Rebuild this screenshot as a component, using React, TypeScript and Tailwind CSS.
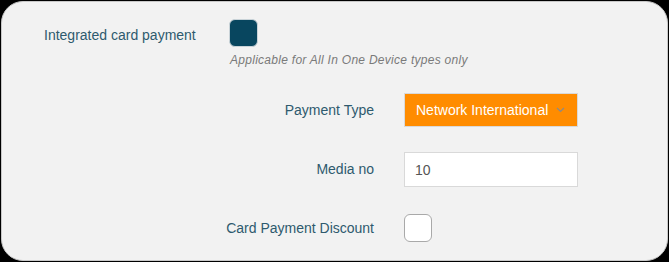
import { useState } from "react";

const labelCls = "text-[14px] text-[#2e5a6e]";

const SettingsPanel = () => {
  const [mediaNo, setMediaNo] = useState("10");

  return (
    <div className="w-[669px] h-[262px] bg-black p-px font-['Liberation_Sans',Arial,sans-serif]">
      <div className="h-full rounded-[22px] border border-[#c8c8c8] bg-[#f2f2f2]">
        {/* integrated card payment */}
        <div className="flex pt-[17px] pl-[42px]">
          <div className={`${labelCls} w-[185px] pt-[6px]`}>Integrated card payment</div>
          <div>
            <div className="w-[29px] h-[28px] rounded-[6px] bg-[#08465f] border border-[#c9d3d8]" />
            <p className="mt-[5px] ml-px text-[12px] leading-4 italic tracking-[0.28px] text-[#7a7a7a]">
              Applicable for All In One Device types only
            </p>
          </div>
        </div>

        <div className="mt-[25px] flex flex-col">
          <div className="flex items-center">
            <div className={`${labelCls} w-[372px] text-right`}>Payment Type</div>
            <div className="ml-[30px] w-[174px] h-[34px] flex items-center justify-between bg-[#ff8c00] border border-[#d9d9d9] pl-[11px] pr-[12px]">
              <span className="text-[14px] text-white">Network International</span>
              <svg width="9" height="6" viewBox="0 0 9 6" fill="none">
                <polyline points="1,1 4.5,4.5 8,1" stroke="#8a8a8a" strokeWidth="1.2" />
              </svg>
            </div>
          </div>

          <div className="mt-[25px] flex items-center">
            <div className={`${labelCls} w-[372px] text-right`}>Media no</div>
            <input
              value={mediaNo}
              onChange={(e) => setMediaNo(e.target.value)}
              className="ml-[30px] w-[174px] h-[35px] bg-white border border-[#d9d9d9] px-[10px] text-[14px] text-[#555] outline-none"
            />
          </div>

          <div className="mt-[27px] flex items-center">
            <div className={`${labelCls} w-[372px] text-right`}>Card Payment Discount</div>
            <div className="ml-[30px] w-[28px] h-[28px] rounded-[6px] bg-white border border-[#a9a9a9]" />
          </div>
        </div>
      </div>
    </div>
  );
};

export default function App() {
  return <SettingsPanel />;
}
